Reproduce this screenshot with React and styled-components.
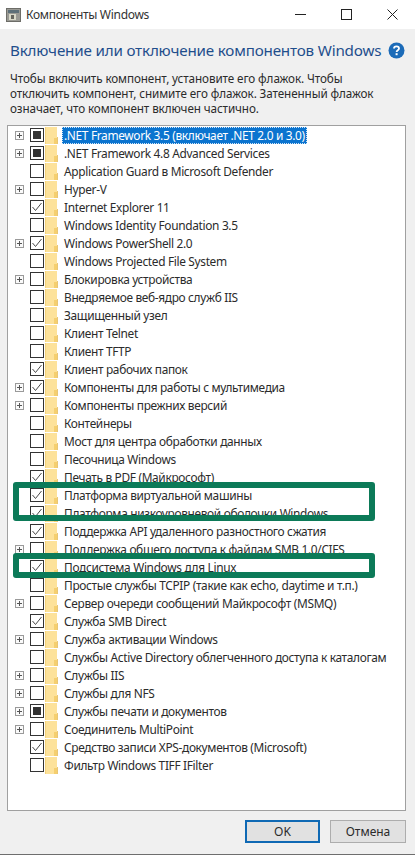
import React from 'react';
import styled, { createGlobalStyle } from 'styled-components';

const GlobalStyle = createGlobalStyle`
  html, body { margin: 0; padding: 0; background: #f0f0f0; }
  body { font-family: "Noto Sans", "Open Sans", sans-serif; color: #2b2b2b; }
`;

// [label, expandable, state]  state: 0 empty, 1 checked, 2 partial
const features = [
  ['.NET Framework 3.5 (включает .NET 2.0 и 3.0)', true, 2],
  ['.NET Framework 4.8 Advanced Services', true, 2],
  ['Application Guard в Microsoft Defender', false, 0],
  ['Hyper-V', true, 0],
  ['Internet Explorer 11', false, 1],
  ['Windows Identity Foundation 3.5', false, 0],
  ['Windows PowerShell 2.0', true, 1],
  ['Windows Projected File System', false, 0],
  ['Блокировка устройства', true, 0],
  ['Внедряемое веб-ядро служб IIS', false, 0],
  ['Защищенный узел', false, 0],
  ['Клиент Telnet', false, 0],
  ['Клиент TFTP', false, 0],
  ['Клиент рабочих папок', false, 1],
  ['Компоненты для работы с мультимедиа', true, 1],
  ['Компоненты прежних версий', true, 0],
  ['Контейнеры', false, 0],
  ['Мост для центра обработки данных', false, 0],
  ['Песочница Windows', false, 0],
  ['Печать в PDF (Майкрософт)', false, 1],
  ['Платформа виртуальной машины', false, 1],
  ['Платформа низкоуровневой оболочки Windows', false, 1],
  ['Поддержка API удаленного разностного сжатия', false, 1],
  ['Поддержка общего доступа к файлам SMB 1.0/CIFS', true, 0],
  ['Подсистема Windows для Linux', false, 1],
  ['Простые службы TCPIP (такие как echo, daytime и т.п.)', false, 0],
  ['Сервер очереди сообщений Майкрософт (MSMQ)', true, 0],
  ['Служба SMB Direct', false, 1],
  ['Служба активации Windows', true, 0],
  ['Службы Active Directory облегченного доступа к каталогам', false, 0],
  ['Службы IIS', true, 0],
  ['Службы для NFS', true, 0],
  ['Службы печати и документов', true, 2],
  ['Соединитель MultiPoint', true, 0],
  ['Средство записи XPS-документов (Microsoft)', false, 1],
  ['Фильтр Windows TIFF IFilter', false, 0],
];

const Window = styled.div`
  width: 415px;
  height: 855px;
  box-sizing: border-box;
  display: flex;
  flex-direction: column;
  background: #f0f0f0;
  border-bottom: 1px solid #6e6e6e;
  overflow: hidden;
`;

const TitleBar = styled.div`
  height: 29px;
  flex: none;
  background: #fff;
  display: flex;
  align-items: center;
  padding-left: 6px;
`;

const TitleText = styled.div`
  margin-left: 5px;
  flex: 1;
  font-size: 12px;
  letter-spacing: -0.3px;
  color: #333;
`;

const WinButton = styled.div`
  width: 46px;
  height: 27px;
  display: flex;
  align-items: center;
  justify-content: center;
`;

const Content = styled.div`
  flex: 1;
  display: flex;
  flex-direction: column;
  padding: 0 9px 10px 7px;
`;

const HeadingRow = styled.div`
  height: 42px;
  display: flex;
  align-items: center;
  justify-content: space-between;
  padding: 0 1px 0 3px;
`;

const Heading = styled.h1`
  margin: 0;
  font-size: 15.2px;
  font-weight: 400;
  letter-spacing: -0.18px;
  color: #1f4e8c;
  white-space: nowrap;
`;

const Description = styled.p`
  margin: 0;
  padding: 0 3px;
  height: 54px;
  font-size: 11.7px;
  line-height: 15px;
  letter-spacing: -0.1px;
  white-space: nowrap;
  color: #2b2b2b;
`;

const List = styled.div`
  position: relative;
  height: 686px;
  box-sizing: border-box;
  background: #fff;
  border: 1px solid #a0a0a0;
`;

const Row = styled.div`
  height: 18px;
  display: flex;
  align-items: center;
  font-size: 11.9px;
  letter-spacing: -0.33px;
  white-space: nowrap;
`;

const ExpanderSlot = styled.div`
  width: 22px;
  flex: none;
  display: flex;
  justify-content: center;
`;

const CheckBox = styled.div`
  width: 14px;
  height: 14px;
  flex: none;
  box-sizing: border-box;
  border: 1px solid #333;
  background: #fff;
  display: flex;
  align-items: center;
  justify-content: center;
`;

const Partial = styled.div`
  width: 8px;
  height: 8px;
  background: #333;
`;

const Label = styled.span`
  margin-left: 4px;
  padding: 0 2px;
  line-height: 17px;
  color: ${(p) => (p.$selected ? '#fff' : '#2b2b2b')};
  background: ${(p) => (p.$selected ? '#0b74cf' : 'transparent')};
  outline: ${(p) => (p.$selected ? '1px dotted #cfe4f7' : 'none')};
  outline-offset: -1px;
`;

const Mark = styled.div`
  position: absolute;
  left: 5px;
  width: 362px;
  top: ${(p) => p.$top}px;
  height: ${(p) => p.$height}px;
  box-sizing: border-box;
  border: 6px solid #0c7a58;
  border-radius: 3px;
`;

const Footer = styled.div`
  display: flex;
  justify-content: flex-end;
  gap: 10px;
  margin-top: 9px;
`;

const Button = styled.button`
  width: ${(p) => p.$width}px;
  height: 23px;
  padding: 0;
  box-sizing: border-box;
  font-family: inherit;
  font-size: 12px;
  color: #2b2b2b;
  background: #e1e1e1;
  border: ${(p) => (p.$primary ? '2px solid #0f69b4' : '1px solid #adadad')};
`;

const FolderSvg = styled.svg`
  margin-left: 1px;
  flex: none;
`;

const AppIcon = () => (
  <svg width="15" height="15" viewBox="0 0 15 15">
    <rect x="0.5" y="1.5" width="14" height="13" fill="#9a9a94" stroke="#6d6d68" />
    <rect x="2" y="3" width="11" height="3" fill="#5d6f78" />
    <rect x="3" y="7" width="7" height="6" fill="#d8d8c8" />
    <rect x="5" y="8" width="3" height="4" fill="#66665f" />
  </svg>
);

const Expander = () => (
  <svg width="9" height="9" viewBox="0 0 9 9">
    <rect x="0.5" y="0.5" width="8" height="8" fill="#fafafa" stroke="#9a9a9a" />
    <path d="M2 4.5H7M4.5 2V7" stroke="#555" fill="none" />
  </svg>
);

const Check = () => (
  <svg width="12" height="12" viewBox="0 0 12 12">
    <path d="M1.5 6L4.5 9.5L10.5 2" stroke="#4a4a4a" strokeWidth="1" fill="none" />
  </svg>
);

const Folder = () => (
  <FolderSvg width="13" height="17" viewBox="0 0 13 17">
    <rect x="0" y="0" width="12" height="17" fill="#fde29a" />
    <rect x="0" y="0" width="1" height="17" fill="#f3d27c" />
    <path d="M9 17V11H12V17Z" fill="#f5cf6f" />
    <rect x="12" y="10" width="1" height="7" fill="#e8c676" />
  </FolderSvg>
);

const HelpIcon = () => (
  <svg width="17" height="17" viewBox="0 0 17 17">
    <circle cx="8.5" cy="8.5" r="8" fill="#1c6bb8" />
    <path d="M6 6.6C6 5 7.2 4.3 8.5 4.3C10 4.3 11 5.2 11 6.4C11 8.2 8.6 8.2 8.6 10" stroke="#fff" strokeWidth="1.8" fill="none" />
    <rect x="7.6" y="11.2" width="2" height="2" fill="#fff" />
  </svg>
);

const featureRows = features.map(([label, expandable, state], i) => (
  <Row key={label}>
    <ExpanderSlot>{expandable && <Expander />}</ExpanderSlot>
    <CheckBox>
      {state === 1 && <Check />}
      {state === 2 && <Partial />}
    </CheckBox>
    <Folder />
    <Label $selected={i === 0}>{label}</Label>
  </Row>
));

export default function App() {
  return (
    <Window>
      <GlobalStyle />
      <TitleBar>
        <AppIcon />
        <TitleText>Компоненты Windows</TitleText>
        <WinButton>
          <svg width="11" height="11" viewBox="0 0 11 11"><path d="M0 5.5H11" stroke="#222" /></svg>
        </WinButton>
        <WinButton>
          <svg width="11" height="11" viewBox="0 0 11 11"><rect x="0.5" y="0.5" width="10" height="10" fill="none" stroke="#222" /></svg>
        </WinButton>
        <WinButton>
          <svg width="11" height="11" viewBox="0 0 11 11"><path d="M0.5 0.5L10.5 10.5M10.5 0.5L0.5 10.5" stroke="#222" /></svg>
        </WinButton>
      </TitleBar>
      <Content>
        <HeadingRow>
          <Heading>Включение или отключение компонентов Windows</Heading>
          <HelpIcon />
        </HeadingRow>
        <Description>
          Чтобы включить компонент, установите его флажок. Чтобы<br />
          отключить компонент, снимите его флажок. Затененный флажок<br />
          означает, что компонент включен частично.
        </Description>
        <List>
          {featureRows}
          <Mark $top={356} $height={39} />
          <Mark $top={427} $height={25} />
        </List>
        <Footer>
          <Button $primary $width={75}>OK</Button>
          <Button $width={76}>Отмена</Button>
        </Footer>
      </Content>
    </Window>
  );
}
